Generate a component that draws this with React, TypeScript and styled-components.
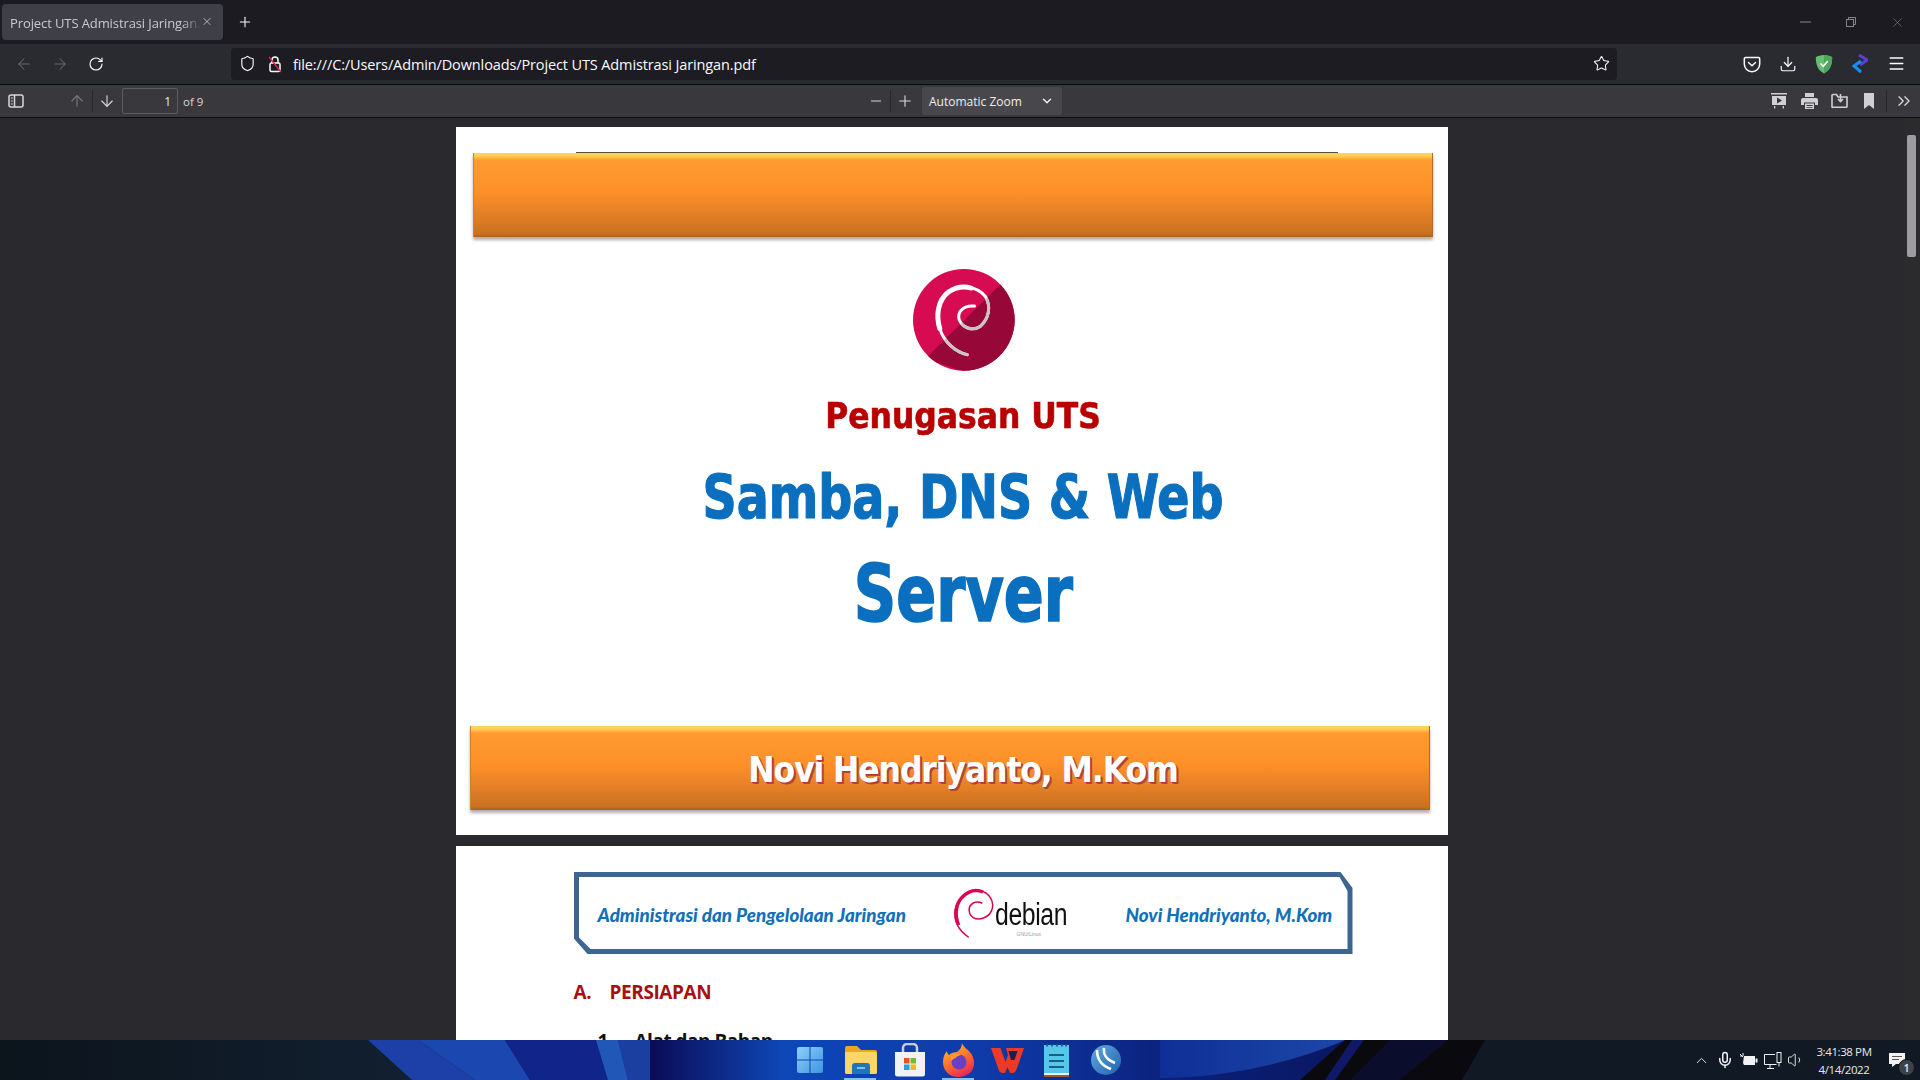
import React from "react";
import styled, { createGlobalStyle } from "styled-components";
import {
  ArrowDown, ArrowLeft, ArrowRight, ArrowUp, ChevronDown, ChevronUp, ChevronsRight,
  Download, Menu, Mic, Minus, Plus, RotateCw, Shield, Star, Volume1, X,
} from "lucide-react";

const Global = createGlobalStyle`
  html, body { margin: 0; padding: 0; height: 100%; overflow: hidden; background: #2a2a2e; }
  * { box-sizing: border-box; }
  body { font-family: "Open Sans", "Liberation Sans", sans-serif; }
`;

const Screen = styled.div`
  width: 1920px; height: 1080px; display: flex; flex-direction: column; overflow: hidden;
`;

/* Tab strip */
const TabStrip = styled.div`
  height: 44px; flex: none; background: #1b1b21; display: flex; align-items: flex-start;
  padding: 4px 0 0 2px; color: #fbfbfe;
`;
const Tab = styled.div`
  width: 221px; height: 36px; background: #3f3f48; border-radius: 4px; display: flex; align-items: center;
  padding: 0 0 0 8px; position: relative;
`;
const TabTitle = styled.div`
  width: 191px; font-size: 13px; white-space: nowrap; overflow: hidden; color: #c9c9cf;
  letter-spacing: -0.1px; padding-top: 1px;
  -webkit-mask-image: linear-gradient(90deg, #000 90%, transparent);
  mask-image: linear-gradient(90deg, #000 90%, transparent);
`;
const TabClose = styled.div`
  width: 12px; display: flex; align-items: center; justify-content: center; color: #e4e4e8; margin-top: -2px;
`;
const NewTab = styled.div`
  width: 44px; height: 36px; display: flex; align-items: center; justify-content: center; color: #fbfbfe;
`;
const WindowControls = styled.div`
  margin-left: auto; display: flex; margin-top: -4px; margin-right: 0; height: 44px;
`;
const WindowButton = styled.div`
  width: 46px; height: 44px; display: flex; align-items: center; justify-content: center; color: #85858a;
`;

/* Nav bar */
const NavBar = styled.div`
  height: 41px; flex: none; background: #2a2a31; display: flex; align-items: center; padding: 0 6px 1px;
  border-bottom: 1px solid #0c0c0d;
`;
const NavButton = styled.div<{ $dim?: boolean }>`
  width: 36px; height: 32px; flex: none; display: flex; align-items: center; justify-content: center;
  color: ${(p) => (p.$dim ? "#66666c" : "#fbfbfe")};
`;
const Address = styled.div`
  width: 1386px; height: 32px; margin-left: 117px; background: #1c1c22; border-radius: 4px;
  display: flex; align-items: center; color: #fbfbfe; font-size: 14.5px; padding-left: 3px; flex: none;
`;
const AddressIcon = styled.div`
  width: 27px; height: 20px; flex: none; display: flex; align-items: center; justify-content: center;
`;
const Url = styled.div`
  margin-left: 5px; white-space: nowrap; letter-spacing: -0.12px; flex: 1; padding-top: 1px;
`;
const StarSlot = styled.div`
  width: 32px; flex: none; display: flex; justify-content: center;
`;
const NavRight = styled.div`
  margin-left: auto; display: flex;
`;

/* PDF toolbar */
const PdfBar = styled.div`
  height: 33px; flex: none; background: #38383d; display: flex; align-items: center; padding: 0 1px 1px 4px;
  border-bottom: 1px solid #0c0c0d; color: #d4d4d6;
`;
const PdfButton = styled.div<{ $w?: number; $dim?: boolean }>`
  width: ${(p) => p.$w ?? 30}px; height: 28px; flex: none; display: flex; align-items: center; justify-content: center;
  color: ${(p) => (p.$dim ? "#77777c" : "#d8d8da")};
`;
const Divider = styled.div<{ $side?: number }>`
  width: 1px; height: 22px; flex: none; background: #27272a; margin: 0 ${(p) => p.$side ?? 0}px;
`;
const PageInput = styled.div`
  width: 56px; height: 26px; margin-left: 2px; border: 1px solid #5c5c60; border-radius: 2px; background: #38383d;
  font-size: 12px; color: #e8e8ea; display: flex; align-items: center; justify-content: flex-end; padding: 1px 6px 0 0; flex: none;
`;
const PageCount = styled.div`
  font-size: 11.5px; color: #d8d8da; margin-left: 5px; width: 21px; white-space: nowrap; flex: none; padding-top: 1px;
`;
const ZoomSelect = styled.div`
  width: 140px; height: 28px; margin-left: 3px; background: #47474c; border-radius: 2px; flex: none;
  display: flex; align-items: center; justify-content: space-between; padding: 1px 8px 0 7px; font-size: 12px; color: #eeeeef;
`;
const PdfRight = styled.div`
  margin-left: auto; display: flex; align-items: center;
`;

/* Viewer */
const ViewerRow = styled.div`
  flex: 1; min-height: 0; display: flex; background: #2a2a2e; overflow: hidden;
`;
const PagesColumn = styled.div`
  flex: 1; display: flex; flex-direction: column; align-items: center; padding-top: 9px; gap: 11px; padding-left: 0;
`;
const ScrollTrack = styled.div`
  width: 17px; flex: none; background: #2b2b2e; padding: 17px 4px 0 4px;
`;
const ScrollThumb = styled.div`
  height: 122px; width: 9px; background: #9d9da1; border-radius: 2px;
`;
const Page = styled.div<{ $h: number }>`
  width: 992px; height: ${(p) => p.$h}px; flex: none; background: #fff; display: flex; flex-direction: column;
`;
const OrangeBar = styled.div<{ $left: number; $top: number }>`
  width: 960px; height: 84px; flex: none; margin-left: ${(p) => p.$left}px; margin-top: ${(p) => p.$top}px;
  position: relative; display: flex; align-items: center; justify-content: center;
  background: linear-gradient(180deg, #ffd25c 0, #ffcf58 3px, #ff9b30 7px, #ff9029 45%, #e27e26 75%, #c9711f 96%, #a5641f 100%);
  box-shadow: 0 3px 3px rgba(0, 0, 0, 0.32), inset 1px 0 0 #c9802f, inset -1px 0 0 #b06c24;
`;
const TopEdge = styled.div`
  position: absolute; top: -1px; left: 103px; right: 95px; height: 1px; background: #55533a;
`;
const TitleColumn = styled.div`
  display: flex; flex-direction: column; align-items: center; padding-left: 24px; height: 489px; flex: none;
`;
const LogoSlot = styled.div`
  width: 102px; height: 102px; margin-top: 32px; flex: none;
`;
const Chunky = styled.div<{ $size: number; $color: string; $top: number; $h: number; $sx: number; $stroke: number }>`
  font-family: "DejaVu Sans", sans-serif; font-weight: 700; font-stretch: condensed;
  font-size: ${(p) => p.$size}px; color: ${(p) => p.$color}; line-height: ${(p) => p.$h}px;
  height: ${(p) => p.$h}px; margin-top: ${(p) => p.$top}px; white-space: nowrap;
  transform: scaleX(${(p) => p.$sx});
  -webkit-text-stroke: ${(p) => p.$stroke}px ${(p) => p.$color};
`;
const NoviText = styled.div`
  font-family: "DejaVu Sans", sans-serif; font-weight: 700; font-stretch: condensed; font-size: 35px; color: #fff;
  letter-spacing: -1.1px; text-shadow: 1px 1px 0 #b23a3a, 2px 2px 0 #a84a3a; padding-left: 27px; margin-top: 4px; white-space: nowrap;
`;

/* Page 2 */
const BannerFrame = styled.div`
  width: 779px; height: 82px; margin: 26px 0 0 118px; flex: none; padding: 5px; background: #3c6591;
  clip-path: polygon(0 0, 767px 0, 100% 16px, 100% 100%, 14px 100%, 0 66px);
`;
const BannerInner = styled.div`
  width: 100%; height: 100%; background: #fff; display: flex; align-items: center; padding: 0 0 0 19px;
  clip-path: polygon(0 0, 761px 0, 100% 14px, 100% 100%, 12px 100%, 0 60px);
`;
const BannerText = styled.div<{ $w: number; $shift?: number }>`
  font-family: "Lato", sans-serif; font-weight: 900; font-style: italic; font-size: 18.8px; color: #1170b8;
  width: ${(p) => p.$w}px; white-space: nowrap; flex: none; padding-top: 3px; margin-left: ${(p) => p.$shift ?? 0}px;
`;
const DebianLogo = styled.div`
  width: 172px; height: 60px; flex: none; margin-left: 44px; display: flex; align-items: center; position: relative;
`;
const DebianWord = styled.div`
  font-family: "Liberation Sans", sans-serif; font-size: 31px; color: #111; transform: scaleX(0.8); transform-origin: left center;
  margin: 3px 0 0 -1px; letter-spacing: -0.5px; position: relative;
`;
const GnuLinux = styled.div`
  position: absolute; left: 65px; top: 48px; font-size: 5px; color: #999; font-family: "Liberation Sans", sans-serif;
`;
const SectionHeading = styled.div`
  margin: 26px 0 0 118px; display: flex; font-family: "Open Sans", sans-serif; font-weight: 700; font-size: 19px;
  color: #a81010; line-height: 24px; letter-spacing: -0.4px;
`;
const HeadingNumber = styled.div`
  width: 36px;
`;
const SubHeading = styled.div`
  margin: 25px 0 0 142px; display: flex; font-family: "Open Sans", sans-serif; font-weight: 700; font-size: 19px;
  color: #111; line-height: 24px; letter-spacing: -0.5px;
`;
const SubNumber = styled.div`
  width: 37px;
`;

/* Taskbar */
const Taskbar = styled.div`
  height: 40px; flex: none; position: relative; background: #111a24; display: flex; align-items: stretch; overflow: hidden;
`;
const Wallpaper = styled.svg`
  position: absolute; inset: 0; width: 100%; height: 100%;
`;
const AppGroup = styled.div`
  position: relative; margin-left: 785px; display: flex;
`;
const AppCell = styled.div<{ $open?: boolean }>`
  width: 49px; height: 40px; display: flex; align-items: center; justify-content: center; position: relative;
  &:first-child { margin-right: 2px; }
  &::after {
    content: ""; position: absolute; bottom: 0; left: 8px; right: 9px; height: 2px;
    background: ${(p) => (p.$open ? "#7fc4f5" : "transparent")};
  }
`;
const Tray = styled.div`
  position: relative; margin-left: auto; display: flex; align-items: center; color: #f2f2f2;
`;
const TrayIcon = styled.div<{ $w: number }>`
  width: ${(p) => p.$w}px; display: flex; justify-content: center; align-items: center; flex: none;
`;
const Clock = styled.div`
  width: 60px; margin-left: 7px; padding-top: 1px; text-align: center; font-family: "Open Sans", sans-serif; font-size: 11.5px; line-height: 18px; color: #e8e8e8;
  letter-spacing: -0.4px; white-space: nowrap;
`;
const Notice = styled.div`
  width: 46px; height: 40px; display: flex; align-items: center; justify-content: center; position: relative;
`;
const NoticeBadge = styled.div`
  position: absolute; left: 24px; top: 19px; width: 17px; height: 17px; border-radius: 50%; background: #3d4247;
  border: 1px solid #111; color: #f0f0f0; font-size: 10px; display: flex; align-items: center; justify-content: center; font-weight: 600;
`;

/* Icons */
const ShieldOutline = () => <Shield size={17} strokeWidth={1.6} color="#fbfbfe" />;
const LockSlash = () => (
  <svg width="18" height="20" viewBox="0 0 18 20" fill="none">
    <path d="M6 9V6a3 3 0 0 1 6 0v3" stroke="#fbfbfe" strokeWidth="1.5" />
    <rect x="4" y="9" width="10" height="8.5" rx="1.5" stroke="#fbfbfe" strokeWidth="1.5" />
    <path d="M3 3l12 15" stroke="#e22850" strokeWidth="1.3" />
  </svg>
);
const PocketIcon = () => (
  <svg width="18" height="18" viewBox="0 0 18 18" fill="none" stroke="#fbfbfe" strokeWidth="1.5">
    <path d="M2.5 2.5h13a1.2 1.2 0 0 1 1.2 1.2V9a7.7 7.7 0 0 1-15.4 0V3.7a1.2 1.2 0 0 1 1.2-1.2z" />
    <path d="M5.5 7.5L9 10.8l3.5-3.3" strokeLinecap="round" />
  </svg>
);
const AdGuard = () => (
  <svg width="18" height="20" viewBox="0 0 18 20">
    <path d="M9 1C5.6 1 2.8 2 .8 3.2.8 10 2.5 16 9 19.5 15.500 16 17.200 10 17.200 3.200 15.200 2 12.400 1 9 1z" fill="#68bc71" />
    <path d="M9 1c3.400 0 6.200 1 8.200 2.200 0 6.800-1.700 12.800-8.200 16.300z" fill="#4fa55b" />
    <path d="M5.500 9.500l2.800 2.800 4.500-5.300" stroke="#fff" strokeWidth="1.6" fill="none" />
  </svg>
);
const Extension = () => (
  <svg width="16" height="20" viewBox="0 0 16 20" fill="none">
    <path d="M7 1l8 5-7 5" stroke="#5a3fd0" strokeWidth="3" />
    <path d="M9 7l-7 5 7 6" stroke="#1590ef" strokeWidth="3" />
  </svg>
);
const SidebarIcon = () => (
  <svg width="16" height="16" viewBox="0 0 16 16" fill="none" stroke="#d8d8da" strokeWidth="1.500">
    <rect x="1" y="2" width="14" height="12" rx="2" />
    <path d="M6.500 2v12" />
    <path d="M2.800 5h2M2.800 8h2M2.800 11h2" strokeWidth="1.200" />
  </svg>
);
const PresentIcon = () => (
  <svg width="16" height="18" viewBox="0 0 16 18" fill="#d0d0d2">
    <rect x="0" y="1" width="16" height="1.500" />
    <path d="M1 4h14v9H1zM6 5.500v6l5-3z" fillRule="evenodd" />
    <path d="M3 14h1.300v2.500H3zM11.700 14H13v2.500h-1.300z" />
  </svg>
);
const PrintIcon = () => (
  <svg width="17" height="16" viewBox="0 0 17 16" fill="#d0d0d2">
    <path d="M4 0h9v4H4z" />
    <path d="M2 5h13a2 2 0 0 1 2 2v5h-3V9.500H3V12H0V7a2 2 0 0 1 2-2z" />
    <path d="M4 10.500h9V16H4zM5.500 12v1h6v-1zM5.500 14v.8h6V14z" fillRule="evenodd" />
  </svg>
);
const FolderDown = () => (
  <svg width="17" height="16" viewBox="0 0 17 16" fill="none" stroke="#d0d0d2" strokeWidth="1.600">
    <path d="M1 14V2.500a1 1 0 0 1 1-1h3.500L7 4h9v9.500a.8.8 0 0 1-.8.8H1.800A.8.8 0 0 1 1 14z" />
    <path d="M9.500 1v7M7 6l2.500 2.500L12 6" />
  </svg>
);
const BookmarkIcon = () => (
  <svg width="10" height="16" viewBox="0 0 10 16" fill="#d0d0d2"><path d="M0 0h10v16l-5-4-5 4z" /></svg>
);
const RestoreIcon = () => (
  <svg width="10" height="10" viewBox="0 0 10 10" fill="none" stroke="#85858a">
    <rect x=".5" y="2.500" width="7" height="7" />
    <path d="M2.500 2.500v-2h7v7h-2" />
  </svg>
);
const MinIcon = () => (
  <svg width="11" height="2" viewBox="0 0 11 2"><path d="M0 1h11" stroke="#85858a" /></svg>
);

const swirl = "M260 313C225 305 190 275 178 235C166 195 172 150 205 125C240 102 290 108 315 140C332 170 325 205 300 228C275 245 245 232 236 208C230 185 248 165 282 168";
const DebianRound = () => (
  <svg width="102" height="102" viewBox="98 57 305 305">
    <defs>
      <clipPath id="disc"><circle cx="250" cy="209" r="152" /></clipPath>
      <clipPath id="shade"><path d="M362 100L135 325L420 420L430 100z" /></clipPath>
    </defs>
    <circle cx="250" cy="209" r="152" fill="#d60b52" />
    <path d="M362 100L135 325L420 420L430 100z" fill="#970839" clipPath="url(#disc)" />
    <path d={swirl} fill="none" stroke="#fff" strokeWidth="9" strokeLinecap="round" />
    <path d="M178 235C166 195 172 150 205 125C225 112 250 108 272 114" fill="none" stroke="#fff" strokeWidth="15" strokeLinecap="round" />
    <g clipPath="url(#shade)"><path d={swirl} fill="none" stroke="#c9c3c6" strokeWidth="9" strokeLinecap="round" /></g>
  </svg>
);
const DebianSwirl = () => (
  <svg width="44" height="60" viewBox="70 45 145 180" fill="none">
    <path d="M125 215C95 195 75 165 80 125C88 80 125 55 160 60C195 68 212 100 200 128C190 150 160 162 140 150C122 138 122 112 140 102C150 97 160 98 170 103" stroke="#d70751" strokeWidth="5" />
    <path d="M92 175C78 140 82 105 105 82C125 62 150 56 172 66" stroke="#d70751" strokeWidth="11" />
  </svg>
);

const WinLogo = () => (
  <svg width="26" height="26" viewBox="0 0 26 26">
    <defs><linearGradient id="w" x1="0" y1="0" x2="1" y2="1"><stop offset="0" stopColor="#8fd0f7" /><stop offset="1" stopColor="#3d95e0" /></linearGradient></defs>
    <path d="M2 0h10.500v12.500H0V2a2 2 0 0 1 2-2zM13.500 0H24a2 2 0 0 1 2 2v10.500H13.500zM0 13.500h12.500V26H2a2 2 0 0 1-2-2zM13.500 13.500H26V24a2 2 0 0 1-2 2H13.500z" fill="url(#w)" />
  </svg>
);
const FolderLogo = () => (
  <svg width="32" height="28" viewBox="0 0 32 28">
    <path d="M2 0h10l4 4h14a2 2 0 0 1 2 2v20a2 2 0 0 1-2 2H2a2 2 0 0 1-2-2V2a2 2 0 0 1 2-2z" fill="#e9a821" />
    <path d="M0 6h30a2 2 0 0 1 2 2v18a2 2 0 0 1-2 2H2a2 2 0 0 1-2-2z" fill="#fcd765" />
    <path d="M7 20a3 3 0 0 1 3-3h12a3 3 0 0 1 3 3v8H7z" fill="#1d76b8" />
    <rect x="12" y="21" width="8" height="2" fill="#7cc4ee" />
  </svg>
);
const StoreLogo = () => (
  <svg width="32" height="34" viewBox="0 0 32 34">
    <path d="M9 9V5a4 4 0 0 1 4-4h6a4 4 0 0 1 4 4v4" fill="none" stroke="#c9ced3" strokeWidth="2.500" />
    <path d="M1 9h30v22a2.500 2.500 0 0 1-2.500 2.500h-25A2.500 2.500 0 0 1 1 31z" fill="#f1f2f3" />
    <rect x="10" y="15" width="5.500" height="5.500" fill="#e8502a" />
    <rect x="16.500" y="15" width="5.500" height="5.500" fill="#78b82a" />
    <rect x="10" y="21.500" width="5.500" height="5.500" fill="#1ea3e8" />
    <rect x="16.500" y="21.500" width="5.500" height="5.500" fill="#fbb813" />
  </svg>
);
const FirefoxLogo = () => (
  <svg width="32" height="34" viewBox="0 0 32 34">
    <defs><linearGradient id="ff" x1="0.2" y1="0" x2="0.7" y2="1"><stop offset="0" stopColor="#ffbd2e" /><stop offset=".55" stopColor="#ff6a2a" /><stop offset="1" stopColor="#e0245e" /></linearGradient></defs>
    <path d="M19 0c1 4 7 7 10 12 3 6 3 12-1 17-4 4-9 5-13 5C7 34 0 28 0 19c0-4 1-8 4-11 0 2 1 3 2 4 2-2 5-3 8-3 3-2 5-5 5-9z" fill="url(#ff)" />
    <circle cx="16" cy="19" r="7.500" fill="#6a3fc0" />
    <path d="M8 13c3-3 7-3 10-1-2 1-5 1-5 3-3 0-3 3-5 2z" fill="#ff9a2e" />
  </svg>
);
const WpsLogo = () => (
  <svg width="33" height="25" viewBox="0 0 33 25">
    <path d="M0 0h9.500l5 14 2.500-7-2-7h15L33 0l-7 20c-1 3-2 5-5 5h-2l-2.500-6-2.500 6h-2c-3 0-4-2-5-5z" fill="#ec3a26" />
    <path d="M17.500 3h9l-3 9h-3.500z" fill="#1a1f50" />
  </svg>
);
const NoteLogo = () => (
  <svg width="25" height="33" viewBox="0 0 25 33">
    <rect x="0" y="1" width="25" height="28" fill="#57c6ea" />
    <rect x="0" y="29" width="25" height="2" fill="#e8f3f6" />
    <rect x="0" y="31" width="25" height="2" fill="#9a5a2a" />
    <path d="M2 1.500h2M7 1.500h2M12 1.500h2M17 1.500h2M21 1.500h2" stroke="#1d6f8e" strokeWidth="2" />
    <path d="M5 11h15M5 17h15M5 23h15" stroke="#14647f" strokeWidth="2" />
  </svg>
);
const WinboxLogo = () => (
  <svg width="30" height="30" viewBox="0 0 30 30">
    <defs><linearGradient id="wb" x1="0" y1="0" x2="1" y2="1"><stop offset="0" stopColor="#63a8e2" /><stop offset="1" stopColor="#1f64ac" /></linearGradient></defs>
    <circle cx="15" cy="15" r="15" fill="url(#wb)" />
    <path d="M6 5c0 9 5 16 14 19M13 3c-1 7 3 12 11 15" fill="none" stroke="#fff" strokeWidth="2.500" />
  </svg>
);
const Plug = () => (
  <svg width="18" height="14" viewBox="0 0 18 14" fill="#f2f2f2">
    <path d="M0 1l3 3M3 0v3M0 3h2" stroke="#f2f2f2" fill="none" />
    <path d="M4 3h11v9H4l-1-2z" />
    <rect x="15.500" y="5.500" width="2" height="4" />
  </svg>
);
const Network = () => (
  <svg width="18" height="17" viewBox="0 0 18 17" fill="none" stroke="#f2f2f2">
    <path d="M11 2.500H.5v10h12" />
    <path d="M6 13v3M3 16.500h7" />
    <rect x="13" y=".5" width="4" height="10" fill="#111a24" />
    <path d="M15 10.500v4" />
  </svg>
);
const NoticeIcon = () => (
  <svg width="16" height="16" viewBox="0 0 16 16"><path d="M0 1h16v11H7l-4 3v-3H0z" fill="#f3f3f3" /><path d="M3 4.500h10M3 7.500h7" stroke="#555" /></svg>
);

const App = () => (
  <>
    <Global />
    <Screen>
      <TabStrip>
        <Tab>
          <TabTitle>Project UTS Admistrasi Jaringan.pdf</TabTitle>
          <TabClose><X size={13} strokeWidth={1.4} /></TabClose>
        </Tab>
        <NewTab><Plus size={16} strokeWidth={1.6} /></NewTab>
        <WindowControls>
          <WindowButton><MinIcon /></WindowButton>
          <WindowButton><RestoreIcon /></WindowButton>
          <WindowButton><X size={15} strokeWidth={1} /></WindowButton>
        </WindowControls>
      </TabStrip>

      <NavBar>
        <NavButton $dim><ArrowLeft size={18} strokeWidth={1.4} /></NavButton>
        <NavButton $dim><ArrowRight size={18} strokeWidth={1.4} /></NavButton>
        <NavButton><RotateCw size={16} strokeWidth={1.7} /></NavButton>
        <Address>
          <AddressIcon><ShieldOutline /></AddressIcon>
          <AddressIcon><LockSlash /></AddressIcon>
          <Url>file:///C:/Users/Admin/Downloads/Project UTS Admistrasi Jaringan.pdf</Url>
          <StarSlot><Star size={17} strokeWidth={1.5} /></StarSlot>
        </Address>
        <NavRight>
          <NavButton><PocketIcon /></NavButton>
          <NavButton><Download size={18} strokeWidth={1.6} /></NavButton>
          <NavButton><AdGuard /></NavButton>
          <NavButton><Extension /></NavButton>
          <NavButton><Menu size={19} strokeWidth={1.7} /></NavButton>
        </NavRight>
      </NavBar>

      <PdfBar>
        <PdfButton $w={24}><SidebarIcon /></PdfButton>
        <PdfButton $w={34} />
        <PdfButton $dim><ArrowUp size={18} strokeWidth={1.5} /></PdfButton>
        <Divider />
        <PdfButton $w={27}><ArrowDown size={18} strokeWidth={1.5} /></PdfButton>
        <PageInput>1</PageInput>
        <PageCount>of 9</PageCount>
        <PdfButton $w={657} />
        <PdfButton $w={29}><Minus size={16} strokeWidth={1.5} /></PdfButton>
        <Divider />
        <PdfButton $w={28}><Plus size={18} strokeWidth={1.5} /></PdfButton>
        <ZoomSelect>Automatic Zoom<ChevronDown size={14} strokeWidth={2.5} /></ZoomSelect>
        <PdfRight>
          <PdfButton><PresentIcon /></PdfButton>
          <PdfButton><PrintIcon /></PdfButton>
          <PdfButton><FolderDown /></PdfButton>
          <PdfButton><BookmarkIcon /></PdfButton>
          <Divider $side={2} />
          <PdfButton><ChevronsRight size={20} strokeWidth={1.6} /></PdfButton>
        </PdfRight>
      </PdfBar>

      <ViewerRow>
        <PagesColumn>
          <Page $h={708}>
            <OrangeBar $left={17} $top={26}><TopEdge /></OrangeBar>
            <TitleColumn>
              <LogoSlot><DebianRound /></LogoSlot>
              <Chunky $size={36} $color="#b80000" $top={23} $h={44} $sx={0.97} $stroke={0.6}>Penugasan UTS</Chunky>
              <Chunky $size={60} $color="#0a6fbe" $top={21} $h={76} $sx={0.88} $stroke={1.2}>Samba, DNS &amp; Web</Chunky>
              <Chunky $size={78} $color="#0a6fbe" $top={13} $h={92} $sx={0.84} $stroke={1.6}>Server</Chunky>
            </TitleColumn>
            <OrangeBar $left={14} $top={0}><NoviText>Novi Hendriyanto, M.Kom</NoviText></OrangeBar>
          </Page>
          <Page $h={300}>
            <BannerFrame>
              <BannerInner>
                <BannerText $w={310}>Administrasi dan Pengelolaan Jaringan</BannerText>
                <DebianLogo>
                  <DebianSwirl />
                  <DebianWord>debian</DebianWord>
                  <GnuLinux>GNU/Linux</GnuLinux>
                </DebianLogo>
                <BannerText $w={205} $shift={2}>Novi Hendriyanto, M.Kom</BannerText>
              </BannerInner>
            </BannerFrame>
            <SectionHeading><HeadingNumber>A.</HeadingNumber>PERSIAPAN</SectionHeading>
            <SubHeading><SubNumber>1.</SubNumber>Alat dan Bahan</SubHeading>
          </Page>
        </PagesColumn>
        <ScrollTrack><ScrollThumb /></ScrollTrack>
      </ViewerRow>

      <Taskbar>
        <Wallpaper viewBox="0 0 1920 40" preserveAspectRatio="none">
          <defs>
            <linearGradient id="navy" x1="0" x2="1" y1="0" y2="0">
              <stop offset="0" stopColor="#0b0b55" /><stop offset="1" stopColor="#0e46b4" />
            </linearGradient>
            <linearGradient id="mid" x1="0" x2="1" y1="0" y2="0">
              <stop offset="0" stopColor="#0d47b8" /><stop offset=".35" stopColor="#0f3aa8" /><stop offset=".7" stopColor="#0b1f78" /><stop offset="1" stopColor="#09175f" />
            </linearGradient>
            <linearGradient id="band" x1="0" x2="1" y1="0" y2="0">
              <stop offset="0" stopColor="#0f2f96" /><stop offset="1" stopColor="#1c47a8" />
            </linearGradient>
            <linearGradient id="left" x1="0" x2="1" y1="0" y2="0">
              <stop offset="0" stopColor="#0c141c" /><stop offset="1" stopColor="#122030" />
            </linearGradient>
          </defs>
          <rect x="0" y="0" width="420" height="40" fill="url(#left)" />
          <polygon points="368,0 418,0 475,40 412,40" fill="#1c3fa8" />
          <polygon points="418,0 505,0 530,40 475,40" fill="#1a48b0" />
          <polygon points="505,0 650,0 650,40 530,40" fill="#10248a" />
          <polygon points="596,0 618,0 628,40 608,40" fill="#2158b8" />
          <polygon points="618,0 650,0 650,40 628,40" fill="#1a3fa0" />
          <rect x="650" y="0" width="130" height="40" fill="url(#navy)" />
          <rect x="780" y="0" width="580" height="40" fill="url(#mid)" />
          <path d="M1160 0H1345C1300 20 1230 38 1160 38z" fill="url(#band)" />
          <polygon points="1345,0 1485,0 1462,40 1300,40" fill="#0a0a0e" />
          <polygon points="1352,0 1364,0 1335,40 1325,40" fill="#10186a" />
          <polygon points="1390,0 1448,0 1400,40 1350,40" fill="#0a1048" opacity=".5" />
        </Wallpaper>
        <AppGroup>
          <AppCell><WinLogo /></AppCell>
          <AppCell $open><FolderLogo /></AppCell>
          <AppCell><StoreLogo /></AppCell>
          <AppCell $open><FirefoxLogo /></AppCell>
          <AppCell><WpsLogo /></AppCell>
          <AppCell><NoteLogo /></AppCell>
          <AppCell><WinboxLogo /></AppCell>
        </AppGroup>
        <Tray>
          <TrayIcon $w={24}><ChevronUp size={17} strokeWidth={1.3} /></TrayIcon>
          <TrayIcon $w={24}><Mic size={18} strokeWidth={2} /></TrayIcon>
          <TrayIcon $w={24}><Plug /></TrayIcon>
          <TrayIcon $w={24}><Network /></TrayIcon>
          <TrayIcon $w={22}><Volume1 size={18} strokeWidth={1.2} /></TrayIcon>
          <Clock>3:41:38 PM<br />4/14/2022</Clock>
          <Notice><NoticeIcon /><NoticeBadge>1</NoticeBadge></Notice>
        </Tray>
      </Taskbar>
    </Screen>
  </>
);

export default App;
